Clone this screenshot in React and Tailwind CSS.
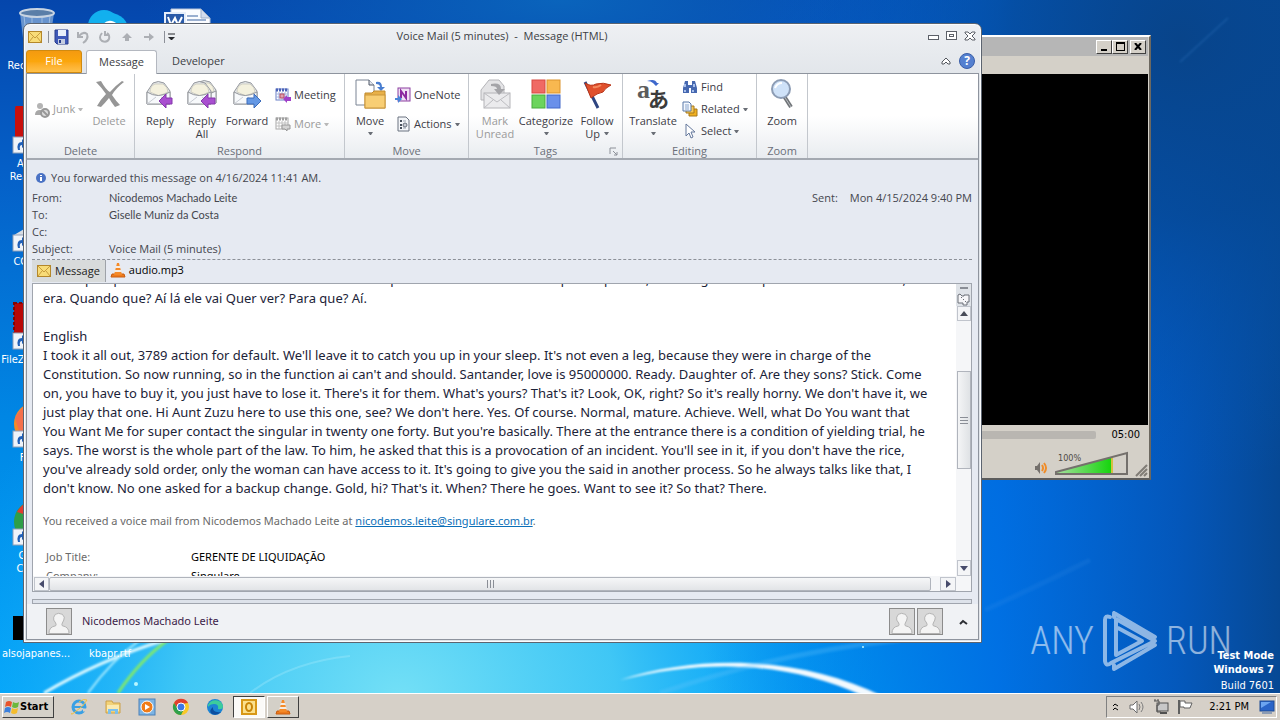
import React, { useState } from 'react';

const UI = "font-['Open_Sans','Noto_Sans',sans-serif]";
const NOTO = "font-['Noto_Sans','Open_Sans',sans-serif]";
const LATO = "font-['Lato','Open_Sans',sans-serif]";
const TAHOMA = "font-['DejaVu_Sans_Condensed','DejaVu_Sans',sans-serif]";

const MESSAGE_LINES = [
  'ele vai pra quem não havia nada mais disso tudo era um pouco assim mesmo dela aqui sim pra ela, ainda algum lado pra mim olha tudo isso, e',
  'era. Quando que? Aí lá ele vai Quer ver? Para que? Aí.',
  '',
  'English',
  "I took it all out, 3789 action for default. We'll leave it to catch you up in your sleep. It's not even a leg, because they were in charge of the",
  "Constitution. So now running, so in the function ai can't and should. Santander, love is 95000000. Ready. Daughter of. Are they sons? Stick. Come",
  "on, you have to buy it, you just have to lose it. There's it for them. What's yours? That's it? Look, OK, right? So it's really horny. We don't have it, we",
  "just play that one. Hi Aunt Zuzu here to use this one, see? We don't here. Yes. Of course. Normal, mature. Achieve. Well, what Do You want that",
  "You Want Me for super contact the singular in twenty one forty. But you're basically. There at the entrance there is a condition of yielding trial, he",
  "says. The worst is the whole part of the law. To him, he asked that this is a provocation of an incident. You'll see in it, if you don't have the rice,",
  "you've already sold order, only the woman can have access to it. It's going to give you the said in another process. So he always talks like that, I",
  "don't know. No one asked for a backup change. Gold, hi? That's it. When? There he goes. Want to see it? So that? There.",
];

function Svg({ w = 16, h = w, box, children }) {
  return (
    <svg width={w} height={h} viewBox={box || `0 0 ${w} ${h}`} fill="none" className="shrink-0" aria-hidden="true">
      {children}
    </svg>
  );
}

/* ---------- wallpaper ---------- */

function Wallpaper() {
  return (
    <svg className="absolute inset-0 h-full w-full" viewBox="0 0 1280 693" preserveAspectRatio="none" fill="none" aria-hidden="true">
      <defs>
        <linearGradient id="sky" x1="0" y1="0" x2="0" y2="1">
          <stop offset="0" stopColor="#0546ac" />
          <stop offset="0.25" stopColor="#0560c8" />
          <stop offset="0.6" stopColor="#0086e4" />
          <stop offset="1" stopColor="#00a6fa" />
        </linearGradient>
        <radialGradient id="glow" gradientUnits="userSpaceOnUse" cx="0" cy="0" r="1" gradientTransform="translate(400 700) scale(480 420)">
          <stop offset="0" stopColor="#74e0f6" />
          <stop offset="0.45" stopColor="#4bcdf5" stopOpacity="0.85" />
          <stop offset="1" stopColor="#089cf8" stopOpacity="0" />
        </radialGradient>
        <radialGradient id="beam" gradientUnits="userSpaceOnUse" cx="0" cy="0" r="1" gradientTransform="translate(560 0) scale(420 120)">
          <stop offset="0" stopColor="#0a64bc" />
          <stop offset="1" stopColor="#0a5cb8" stopOpacity="0" />
        </radialGradient>
        <linearGradient id="shade" x1="0" y1="0" x2="1" y2="0">
          <stop offset="0.55" stopColor="#0060d8" stopOpacity="0" />
          <stop offset="0.78" stopColor="#0068e0" stopOpacity="0.85" />
          <stop offset="0.92" stopColor="#0454b8" stopOpacity="0.95" />
          <stop offset="1" stopColor="#064894" />
        </linearGradient>
        <radialGradient id="corner" gradientUnits="userSpaceOnUse" cx="0" cy="0" r="1" gradientTransform="translate(1180 40) scale(420 440)">
          <stop offset="0" stopColor="#08448a" />
          <stop offset="0.4" stopColor="#064894" stopOpacity="0.75" />
          <stop offset="1" stopColor="#0458b8" stopOpacity="0" />
        </radialGradient>
        <filter id="soft">
          <feGaussianBlur stdDeviation="1" />
        </filter>
      </defs>
      <rect width="1280" height="693" fill="url(#sky)" />
      <rect width="1280" height="693" fill="url(#glow)" />
      <rect width="1280" height="693" fill="url(#shade)" />
      <rect width="1280" height="693" fill="url(#beam)" />
      <rect width="1280" height="693" fill="url(#corner)" />
      <path d="M1180 62L1228 18" stroke="#5aa6f0" strokeOpacity="0.15" strokeWidth="2" filter="url(#soft)" />
      <path d="M985 610Q1040 585 1090 560" stroke="#5aa6f0" strokeOpacity="0.1" strokeWidth="5" filter="url(#soft)" />
      <path d="M250 693Q290 662 350 656" stroke="#b4f0fc" strokeOpacity="0.3" strokeWidth="2" />
      <g filter="url(#soft)">
        <path d="M44 693Q100 660 165 640" stroke="#d8f8ff" strokeWidth="3" />
        <path d="M88 693Q112 660 140 640" stroke="#a8ecff" strokeWidth="2" />
        <path d="M118 693Q140 660 168 640" stroke="#7ee870" strokeWidth="3" />
        <path d="M620 680C700 654 800 656 882 696L868 698C790 662 710 658 620 680Z" fill="#ffffff" fillOpacity="0.95" />
        <path d="M660 693Q780 652 900 640" stroke="#6cc8fa" strokeOpacity="0.25" strokeWidth="5" />
      </g>
      <circle cx="136" cy="684" r="2" fill="#b8f6ff" />
      <circle cx="863" cy="647" r="1" fill="#b8f6ff" />
    </svg>
  );
}

/* ---------- desktop icons ---------- */

function Shortcut() {
  return (
    <g>
      <rect x="1" y="31" width="16" height="16" fill="#eef3fa" stroke="#8fa0b8" />
      <path d="M6 44Q4 36 10 36V33L15 38L10 42V39Q7 39 8 44Z" fill="#1f5fb8" />
    </g>
  );
}

const ICON_ART = {
  bin: (
    <>
      <path d="M8 5L13 47H36L42 5Z" fill="#7fa6d6" fillOpacity="0.8" />
      <path d="M12 8L16 44M20 9V44M30 9V44M38 8L34 44" stroke="#9cbce0" />
      <ellipse cx="25" cy="5" rx="17" ry="4" fill="#5a7ea8" stroke="#c8d4e2" strokeWidth="2" />
    </>
  ),
  skype: (
    <>
      <circle cx="18" cy="18" r="16" fill="#12b0ee" />
      <circle cx="24" cy="24" r="19" fill="#12b0ee" />
      <path d="M31 18Q24 12 19 17Q17 22 24 24Q32 27 29 32Q24 36 17 31" stroke="#fff" strokeWidth="4" />
    </>
  ),
  word: (
    <>
      <path d="M8 1H38L47 10V47H8Z" fill="#fbfcff" stroke="#b8c4d8" />
      <path d="M38 1V10H47Z" fill="#d3dcec" stroke="#9fb0c8" />
      <path d="M24 8H35M24 12H43" stroke="#9bb0d0" strokeWidth="2" />
      <rect x="2" y="5" width="20" height="17" fill="#2a5aa8" stroke="#e6eefa" strokeWidth="2" />
      <path d="M5 9L8 17L12 10L15 17L19 9" stroke="#fff" strokeWidth="2" />
    </>
  ),
  reader: (
    <>
      <rect x="3" y="-3" width="44" height="46" rx="6" fill="#c8100c" />
      <Shortcut />
    </>
  ),
  cleaner: (
    <>
      <path d="M2 31L24 18L46 31V44H14Z" fill="#d8dde4" />
      <Shortcut />
    </>
  ),
  filezilla: (
    <>
      <rect x="2" y="1" width="44" height="42" fill="#b80808" stroke="#7c0606" strokeWidth="2" strokeDasharray="3 2" />
      <Shortcut />
    </>
  ),
  firefox: (
    <>
      <circle cx="24" cy="24" r="22" fill="#f58a28" />
      <path d="M3 18Q8 8 18 3Q12 12 20 20L8 34Z" fill="#f4704c" />
      <Shortcut />
    </>
  ),
  chrome: (
    <>
      <circle cx="24" cy="24" r="22" fill="#2e9e48" />
      <path d="M5 14A22 22 0 0 1 44 14L24 20Z" fill="#e23c30" />
      <circle cx="24" cy="24" r="9" fill="#3b7ded" stroke="#fff" strokeWidth="2" />
      <Shortcut />
    </>
  ),
  black: <rect x="1" y="20" width="46" height="24" fill="#000" />,
};

const DESKTOP = [
  { art: 'bin', lines: ['Recycle Bin'], place: 'col-start-1 row-start-1' },
  { art: 'skype', lines: [], place: 'col-start-2 row-start-1' },
  { art: 'word', lines: [], place: 'col-start-3 row-start-1' },
  { art: 'reader', lines: ['Acrobat', 'Reader DC'], place: 'col-start-1 row-start-2' },
  { art: 'cleaner', lines: ['CCleaner'], place: 'col-start-1 row-start-3' },
  { art: 'filezilla', lines: ['FileZilla Client'], place: 'col-start-1 row-start-4' },
  { art: 'firefox', lines: ['Firefox'], place: 'col-start-1 row-start-5' },
  { art: 'chrome', lines: ['Google', 'Chrome'], place: 'col-start-1 row-start-6' },
  { art: 'black', lines: ['alsojapanes...'], place: 'col-start-1 row-start-7' },
  { art: 'black', lines: ['kbapr.rtf'], place: 'col-start-2 row-start-7' },
];

function DesktopIcons() {
  return (
    <div className="absolute left-0 top-0 grid auto-rows-[98px] grid-cols-[72px_76px_78px]">
      {DESKTOP.map(({ art, lines, place }) => (
        <div key={place} className={`flex flex-col items-center whitespace-nowrap pt-2 text-[11px] leading-[13px] text-white ${TAHOMA} ${place}`}>
          <Svg w={48} h={51}>{ICON_ART[art]}</Svg>
          {lines.map((line) => (
            <span key={line}>{line}</span>
          ))}
        </div>
      ))}
    </div>
  );
}

/* ---------- ribbon icons ---------- */

function Envelope({ x = 0 }) {
  return (
    <g transform={`translate(${x} 0)`}>
      <path d="M2 14L8 5Q13 2 19 5L25 13V26H2Z" fill="#e4e7ea" stroke="#94979c" />
      <path d="M5 14Q5 8 10 6H18Q23 9 23 14L14 18Z" fill="#f4f1de" stroke="#d0cfc4" />
      <path d="M2 14Q13 21 25 14V26H2Z" fill="#f7f9fb" stroke="#94979c" />
      <path d="M2 26L11 19M25 26L16 19" stroke="#c8ccd4" />
    </g>
  );
}

const ReplyIcon = () => (
  <Svg w={32}>
    <Envelope x={1} />
    <path d="M15 23L22 16V20H28V26H22V30Z" fill="#a94fd0" stroke="#8438ac" />
  </Svg>
);

const ReplyAllIcon = () => (
  <Svg w={32}>
    <g transform="translate(5 -1)"><Envelope /></g>
    <Envelope />
    <path d="M15 23L22 16V20H29V26H22V30Z" fill="#a94fd0" stroke="#8438ac" />
  </Svg>
);

const ForwardIcon = () => (
  <Svg w={32}>
    <Envelope x={1} />
    <path d="M30 23L23 16V20H16V26H23V30Z" fill="#6498e4" stroke="#3c6cba" />
  </Svg>
);

const DeleteIcon = () => (
  <Svg w={32}>
    <path d="M3 4L8 3Q13 12 17 14Q22 8 29 3L31 4Q23 10 19 17Q23 23 27 27L22 29Q18 24 16 20Q12 25 8 29L4 28Q8 21 13 16Q9 10 3 4Z" fill="#969696" />
  </Svg>
);

const JunkIcon = () => (
  <Svg w={16}>
    <circle cx="6" cy="4" r="3" fill="#b4b4b4" />
    <path d="M1 13Q1 8 6 8Q9 8 10 13Z" fill="#a8a8a8" />
    <circle cx="11" cy="11" r="4" fill="#dcdcdc" stroke="#989898" strokeWidth="2" />
    <path d="M8 8L14 14" stroke="#989898" strokeWidth="2" />
  </Svg>
);

const MeetingIcon = ({ muted }) => (
  <Svg w={16}>
    <rect x="1" y="2" width="12" height="11" fill="#fff" stroke={muted ? '#a8a8a8' : '#6a80c8'} />
    <path d="M1 3H13" stroke={muted ? '#a0a0a0' : '#4a62b8'} strokeWidth="3" strokeDasharray="2 1" />
    <path d="M4 5V13M7 5V13M10 5V13M1 7H13M1 10H13" stroke={muted ? '#c0c0c0' : '#a4b4e0'} />
    {muted ? (
      <path d="M7 9H15V13H12V15L10 13H7Z" fill="#d4d4d4" stroke="#989898" />
    ) : (
      <>
        <rect x="5" y="7" width="4" height="4" fill="#e0a0b0" stroke="#b84a60" />
        <path d="M8 12L12 8V10H16V14H12V16Z" fill="#a040c8" />
      </>
    )}
  </Svg>
);

const MoveIcon = () => (
  <Svg w={32}>
    <path d="M2 2H15L20 7V27H2Z" fill="#fff" stroke="#7a8494" />
    <path d="M15 2V7H20" fill="#e0e4ec" stroke="#505868" />
    <path d="M22 4Q28 3 28 9H31L27 13L23 9H26Q26 6 22 6Z" fill="#4a7ed0" />
    <path d="M11 15H18L20 13H31V30H11Z" fill="#e8b048" stroke="#c08a2c" />
    <rect x="11" y="17" width="20" height="13" fill="#f8ce74" stroke="#c9953a" />
  </Svg>
);

const OneNoteIcon = () => (
  <Svg w={16}>
    <rect x="3" y="1" width="12" height="13" fill="#f0e0f4" stroke="#8b3fa0" />
    <path d="M6 11V4L11 11V4" stroke="#8b2aa0" strokeWidth="2" />
    <path d="M0 11H3V8L7 12L3 16V13H0Z" fill="#4a86d8" />
  </Svg>
);

const ActionsIcon = () => (
  <Svg w={16}>
    <path d="M3 1H11L14 4V15H3Z" fill="#f4f6f9" stroke="#6b7380" />
    <path d="M5 5H7M5 9H7M5 12H7" stroke="#48505c" strokeWidth="2" />
    <path d="M8 5H11M8 12H11" stroke="#9aa2ae" />
    <circle cx="10" cy="9" r="2" fill="#c8ccd4" stroke="#6b7380" />
  </Svg>
);

const UnreadIcon = () => (
  <Svg w={32}>
    <path d="M2 12L10 2H20L25 8V22H2Z" fill="#e4e4e6" stroke="#b4b4b8" />
    <rect x="5" y="15" width="26" height="15" fill="#ebebed" stroke="#b4b4b8" />
    <path d="M5 15L18 24L31 15M5 30L14 22M31 30L22 22" stroke="#bcbcc0" />
    <path d="M12 6Q22 4 22 11H26L20 17L15 11H18Q18 8 12 8Z" fill="#a4a4a8" />
  </Svg>
);

const CategorizeIcon = () => (
  <Svg w={32}>
    <rect x="2" y="2" width="13" height="13" fill="#f06a64" stroke="#d84840" />
    <rect x="17" y="2" width="13" height="13" fill="#f8b850" stroke="#dc942c" />
    <rect x="2" y="17" width="13" height="13" fill="#6cd45c" stroke="#48ac3c" />
    <rect x="17" y="17" width="13" height="13" fill="#6a90ea" stroke="#4268c8" />
  </Svg>
);

const FlagIcon = () => (
  <Svg w={32}>
    <path d="M4 4L17 30" stroke="#2e4480" strokeWidth="3" />
    <path d="M4 5Q10 9 15 6Q22 4 30 7Q24 10 22 14Q16 15 10 20Z" fill="#e0502c" stroke="#b83418" />
    <path d="M12 9Q16 10 20 7" stroke="#f48a60" strokeWidth="2" />
  </Svg>
);

const TranslateIcon = () => (
  <svg width="32" height="32" viewBox="0 0 32 32" className="shrink-0 overflow-visible" aria-hidden="true">
    <text x="0" y="20" fontSize="26" fontWeight="bold" fill="#5c5c5c" className="font-['Liberation_Serif',serif]">a</text>
    <text x="11" y="29" fontSize="21" fontWeight="bold" fill="#3c3c3c" className="font-['Noto_Sans_CJK_JP',sans-serif]">あ</text>
    <path d="M10 3Q18 0 20 5H22L19 8L16 5Q14 3 10 3Z" fill="#3e68cc" />
  </svg>
);

const FindIcon = () => (
  <Svg w={16}>
    <path d="M3 2H6V6H10V2H13L15 9V14H9V9H7V14H1V9Z" fill="#4668b0" />
    <path d="M3 5V8M12 5V8M3 11V13M11 11V13" stroke="#a8c0ec" strokeWidth="2" />
  </Svg>
);

const RelatedIcon = () => (
  <Svg w={16}>
    <path d="M7 8H15V15H7Z" fill="#f0b020" stroke="#a87818" />
    <path d="M4 5H12V12H4Z" fill="#f6c858" stroke="#a87818" />
    <path d="M1 1H7L9 3V10H1Z" fill="#f4f8fe" stroke="#5878a8" />
    <path d="M3 4H7M3 6H7M3 8H7" stroke="#88a4cc" />
  </Svg>
);

const SelectIcon = () => (
  <Svg w={16}>
    <path d="M4 1V13L7 10L9 15L11 14L9 9H13Z" fill="#fff" stroke="#64789c" />
  </Svg>
);

const ZoomIcon = () => (
  <Svg w={32}>
    <path d="M18 18L25 29" stroke="#707478" strokeWidth="4" />
    <path d="M18 18L25 29" stroke="#b8bcc0" strokeWidth="1" />
    <circle cx="15" cy="11" r="9" fill="#cfe2f8" stroke="#8c9cb4" strokeWidth="2" />
    <path d="M9 10Q11 5 16 5" stroke="#fff" strokeWidth="2" />
  </Svg>
);

const MailIcon = ({ w = 14 }) => (
  <Svg w={w} h={w - 2} box="0 0 14 12">
    <rect x="0.5" y="0.5" width="13" height="11" fill="#f8dc78" stroke="#b4872a" />
    <path d="M1 1L7 7L13 1M1 11L5 6M13 11L9 6" stroke="#c89c3c" />
  </Svg>
);

const ConeIcon = ({ w = 16 }) => (
  <Svg w={w} box="0 0 16 16">
    <path d="M2 12H14L15 15H1Z" fill="#ee7a1c" stroke="#c85c10" />
    <path d="M7 1H9L12 13H4Z" fill="#f58a28" />
    <path d="M6 4H10L11 6H5ZM5 8H11L12 10H4Z" fill="#f4ece4" />
  </Svg>
);

const Person = () => (
  <span className="block h-[27px] w-[26px] shrink-0 border border-[#8c8c8c] bg-[#d8d8d8]">
    <svg viewBox="0 0 25 25" className="h-full w-full" aria-hidden="true">
      <path d="M2 25Q2 18 9 17Q10 16 9 14Q6 11 7 8Q8 4 12 4Q17 4 18 8Q18 11 16 14Q15 16 16 17Q23 18 23 25Z" fill="#f4f4f4" stroke="#b0b0b0" />
    </svg>
  </span>
);

function Caret({ muted }) {
  return (
    <Svg w={5} h={3}>
      <path d="M0 0H5L3 3H2Z" fill={muted ? '#b8b8b8' : '#6a6e76'} />
    </Svg>
  );
}

/* ---------- ribbon ---------- */

function BigButton({ icon, label, second, caret, disabled, width }) {
  return (
    <button
      type="button"
      disabled={disabled}
      className={`flex shrink-0 flex-col items-center whitespace-nowrap pt-[2px] leading-[13px] ${width} ${disabled ? 'text-[#9a9a9a]' : 'text-[#3c3c46]'}`}
    >
      {icon}
      <span className="mt-1">{label}</span>
      <span className="flex h-[13px] items-center gap-1">
        {second}
        {caret && <Caret muted={disabled} />}
      </span>
    </button>
  );
}

function SmallButton({ icon, label, caret, disabled }) {
  return (
    <button type="button" disabled={disabled} className={`flex h-[22px] items-center gap-[3px] whitespace-nowrap ${disabled ? 'text-[#9a9a9a]' : 'text-[#3c3c46]'}`}>
      {icon}
      <span>{label}</span>
      {caret && <Caret muted={disabled} />}
    </button>
  );
}

function Group({ title, width, launcher, children }) {
  return (
    <section className={`flex shrink-0 flex-col border-r border-[#c3c7cd] ${width}`}>
      <div className="flex flex-1 pt-[2px]">{children}</div>
      <div className="relative h-[15px] text-center leading-[15px] text-[#6a6e78]">
        {title}
        {launcher && (
          <span className="absolute right-1 top-1">
            <Svg w={9}>
              <path d="M1 7V1H7M4 4L8 8M8 5V8H5" stroke="#8c9098" />
            </Svg>
          </span>
        )}
      </div>
    </section>
  );
}

function Ribbon() {
  return (
    <div className="flex h-[86px] overflow-hidden border-b-2 border-[#a4a9b1] bg-gradient-to-b from-white via-white to-[#e9ecf0]">
      <Group title="Delete" width="w-[108px]">
        <div className="flex w-[61px] flex-col justify-center pl-[7px]">
          <SmallButton icon={<JunkIcon />} label="Junk" caret disabled />
        </div>
        <BigButton icon={<DeleteIcon />} label="Delete" disabled width="w-[42px]" />
      </Group>
      <Group title="Respond" width="w-[210px]">
        <BigButton icon={<ReplyIcon />} label="Reply" width="ml-1 w-[42px]" />
        <BigButton icon={<ReplyAllIcon />} label="Reply" second="All" width="w-[42px]" />
        <BigButton icon={<ForwardIcon />} label="Forward" width="w-[48px]" />
        <div className="flex flex-col gap-[7px] pl-1 pt-2">
          <SmallButton icon={<MeetingIcon />} label="Meeting" />
          <SmallButton icon={<MeetingIcon muted />} label="More" caret disabled />
        </div>
      </Group>
      <Group title="Move" width="w-[124px]">
        <BigButton icon={<MoveIcon />} label="Move" caret width="ml-1 w-[42px]" />
        <div className="flex flex-col gap-[7px] pl-1 pt-2">
          <SmallButton icon={<OneNoteIcon />} label="OneNote" />
          <SmallButton icon={<ActionsIcon />} label="Actions" caret />
        </div>
      </Group>
      <Group title="Tags" width="w-[154px]" launcher>
        <BigButton icon={<UnreadIcon />} label="Mark" second="Unread" disabled width="ml-1 w-[44px]" />
        <BigButton icon={<CategorizeIcon />} label="Categorize" caret width="w-[58px]" />
        <BigButton icon={<FlagIcon />} label="Follow" second="Up" caret width="w-[44px]" />
      </Group>
      <Group title="Editing" width="w-[134px]">
        <BigButton icon={<TranslateIcon />} label="Translate" caret width="ml-1 w-[52px]" />
        <div className="flex flex-col pl-[3px]">
          <SmallButton icon={<FindIcon />} label="Find" />
          <SmallButton icon={<RelatedIcon />} label="Related" caret />
          <SmallButton icon={<SelectIcon />} label="Select" caret />
        </div>
      </Group>
      <Group title="Zoom" width="w-[51px]">
        <BigButton icon={<ZoomIcon />} label="Zoom" width="w-full" />
      </Group>
    </div>
  );
}

/* ---------- message window ---------- */

function TitleBar() {
  return (
    <header className="flex h-[21px] items-center px-[2px]">
      <div className="flex flex-1 items-center gap-[6px]">
        <MailIcon />
        <span className="-mr-[2px] h-3 w-px bg-[#8c9098]" />
        <button type="button" aria-label="Save">
          <Svg w={16}>
            <path d="M2 1H15V15H4L2 13Z" fill="#3e58b8" stroke="#283c8c" />
            <rect x="5" y="1" width="8" height="6" fill="#e8eefa" />
            <rect x="5" y="10" width="7" height="5" fill="#c4cce0" />
            <rect x="6" y="11" width="2" height="3" fill="#283c8c" />
          </Svg>
        </button>
        <button type="button" aria-label="Undo">
          <Svg w={16}>
            <path d="M3 3V8H8M4 7Q8 2 12 5Q14 10 8 14" stroke="#acafb4" strokeWidth="2" />
          </Svg>
        </button>
        <button type="button" aria-label="Redo">
          <Svg w={16}>
            <path d="M5 4Q1 9 5 12Q10 14 12 10Q13 6 10 4M8 2V6H12" stroke="#acafb4" strokeWidth="2" />
          </Svg>
        </button>
        <button type="button" aria-label="Previous item">
          <Svg w={16}>
            <path d="M8 4L13 9H10V12H6V9H3Z" fill="#acafb4" />
          </Svg>
        </button>
        <button type="button" aria-label="Next item">
          <Svg w={16}>
            <path d="M3 7H8V4L13 8L8 12V9H3Z" fill="#acafb4" />
          </Svg>
        </button>
        <span className="ml-px h-3 w-px bg-[#8c9098]" />
        <button type="button" aria-label="Customize toolbar" className="-ml-[3px]">
          <Svg w={7} h={8}>
            <path d="M0 1H7" stroke="#26282c" />
            <path d="M0 4H7L4 7H3Z" fill="#26282c" />
          </Svg>
        </button>
      </div>
      <h1 className="text-[11px] text-[#3c3e44]">Voice Mail (5 minutes)&nbsp; -&nbsp; Message (HTML)</h1>
      <div className="flex flex-1 items-center justify-end gap-[6px] pb-[2px] pr-px">
        <button type="button" aria-label="Minimize">
          <Svg w={12}>
            <rect x="0.5" y="5.5" width="10" height="4" fill="#fff" stroke="#5c6068" />
          </Svg>
        </button>
        <button type="button" aria-label="Maximize">
          <Svg w={12}>
            <rect x="0.5" y="1.5" width="10" height="8" fill="#fff" stroke="#5c6068" />
            <rect x="3.5" y="4.5" width="4" height="2" fill="#fff" stroke="#5c6068" />
          </Svg>
        </button>
        <button type="button" aria-label="Close">
          <Svg w={12}>
            <path d="M1 2H4L6 4L8 2H11V3L8 6L11 9V10H8L6 8L4 10H1V9L4 6L1 3Z" fill="#fff" stroke="#5c6068" />
          </Svg>
        </button>
      </div>
    </header>
  );
}

function Tabs() {
  return (
    <nav className="flex h-[26px] items-end text-[11px]">
      <button type="button" className="h-[23px] w-14 rounded-t-[3px] border border-[#d08a10] bg-gradient-to-b from-[#f49a10] via-[#fba60c] to-[#ffc048] text-white">
        File
      </button>
      <button type="button" className="relative top-px ml-1 h-6 w-[71px] rounded-t-[3px] border border-b-0 border-[#b4b8c0] bg-white text-[#3c3e44]">
        Message
      </button>
      <button type="button" className="h-[23px] px-[15px] text-[#3c3e44]">
        Developer
      </button>
      <div className="ml-auto flex items-center gap-2 pb-1 pr-1">
        <button type="button" aria-label="Collapse ribbon">
          <Svg w={10}>
            <path d="M1 6L5 2L9 6V8H7L5 6L3 8H1Z" fill="#fff" stroke="#54585f" />
          </Svg>
        </button>
        <button type="button" aria-label="Help" className="h-4 w-4 rounded-full border border-[#3a5ea8] bg-[#5480d0] text-xs font-bold leading-[14px] text-white">
          ?
        </button>
      </div>
    </nav>
  );
}

function HeaderRow({ name, children }) {
  return (
    <div className="flex h-[17px] items-center">
      <dt className="w-[77px]">{name}</dt>
      <dd>{children}</dd>
    </div>
  );
}

const SB_BUTTON = 'flex shrink-0 items-center justify-center border border-[#c0c4cc] bg-[#f4f5f7]';

function VerticalScroll() {
  return (
    <div className="flex w-[15px] shrink-0 flex-col items-center bg-[#f5f6f8]">
      <div className="flex w-full flex-col items-center gap-1 bg-[#dfe3e8] pt-[3px]">
        <span className="h-[2px] w-2 bg-[#8a8e96]" />
        <Svg w={13}>
          <path d="M1 2L3 1L5 3H7V2H12V9H10V12H6V10H1Z" fill="#f6f6f8" stroke="#6c7078" />
          <path d="M4 5L5 4M6 7L7 6M8 9L9 8" stroke="#6c7078" />
        </Svg>
      </div>
      <button type="button" aria-label="Scroll up" className={`h-[15px] w-[14px] ${SB_BUTTON}`}>
        <Svg w={8} h={5}>
          <path d="M0 5L4 0L8 5Z" fill="#484c58" />
        </Svg>
      </button>
      <div className="flex w-full flex-1 flex-col items-center">
        <div className="grow-[50]" />
        <div className="flex h-[98px] w-[14px] flex-col items-center justify-center gap-[2px] border border-[#b0b4bc] bg-gradient-to-r from-[#f4f5f6] to-[#dfe2e5]">
          <span className="h-px w-2 bg-[#8a8e96]" />
          <span className="h-px w-2 bg-[#8a8e96]" />
          <span className="h-px w-2 bg-[#8a8e96]" />
        </div>
        <div className="grow-[91]" />
      </div>
      <button type="button" aria-label="Scroll down" className={`h-4 w-[14px] ${SB_BUTTON}`}>
        <Svg w={8} h={5}>
          <path d="M0 0H8L4 5Z" fill="#484c6c" />
        </Svg>
      </button>
    </div>
  );
}

function HorizontalScroll() {
  return (
    <div className="flex h-[15px] shrink-0 items-center bg-[#f5f6f8] pl-px pr-[15px]">
      <button type="button" aria-label="Scroll left" className={`h-[14px] w-[15px] ${SB_BUTTON}`}>
        <Svg w={5} h={8}>
          <path d="M5 0V8L0 4Z" fill="#484c6c" />
        </Svg>
      </button>
      <div className="mr-[9px] flex h-[14px] flex-1 items-center justify-center gap-[2px] rounded-[2px] border border-[#b0b4bc] bg-gradient-to-b from-[#f6f7f8] to-[#e2e4e7]">
        <span className="h-2 w-px bg-[#8a8e96]" />
        <span className="h-2 w-px bg-[#8a8e96]" />
        <span className="h-2 w-px bg-[#8a8e96]" />
      </div>
      <button type="button" aria-label="Scroll right" className={`h-[14px] w-4 ${SB_BUTTON}`}>
        <Svg w={5} h={8}>
          <path d="M0 0V8L5 4Z" fill="#484c6c" />
        </Svg>
      </button>
    </div>
  );
}

function MessageBody() {
  return (
    <div className="flex min-h-0 flex-1 flex-col border border-[#a0a5ae] bg-white">
      <div className="flex min-h-0 flex-1">
        <article className={`min-w-0 flex-1 overflow-hidden pl-[10px] ${NOTO}`}>
          <div className="-mt-[14px] whitespace-nowrap text-[13px] leading-[19px] text-[#1c2338]">
            {MESSAGE_LINES.map((line, i) => (
              <p key={i} className="h-[19px]">{line}</p>
            ))}
          </div>
          <p className="mt-[13px] whitespace-nowrap text-[11px] leading-[19px] text-[#6a6a6a]">
            You received a voice mail from Nicodemos Machado Leite at{' '}
            <a href="mailto:nicodemos.leite@singulare.com.br" className="text-[#0b6fb8] underline">nicodemos.leite@singulare.com.br</a>.
          </p>
          <table className="ml-[3px] mt-[17px] text-[11px] leading-[19px]">
            <tbody>
              <tr>
                <th className="w-[145px] text-left font-normal text-[#6a6a6a]">Job Title:</th>
                <td className="text-black">GERENTE DE LIQUIDAÇÃO</td>
              </tr>
              <tr>
                <th className="text-left font-normal text-[#6a6a6a]">Company:</th>
                <td className="text-black">Singulare</td>
              </tr>
            </tbody>
          </table>
        </article>
        <VerticalScroll />
      </div>
      <HorizontalScroll />
    </div>
  );
}

function MessageWindow() {
  return (
    <main className={`absolute bottom-[50px] left-[23px] right-[298px] top-[23px] flex flex-col rounded-t-[7px] border border-[#5c6470] bg-gradient-to-b from-[#eef0f3] to-[#e0e4e9] to-[60px] p-[2px] text-[11px] shadow-[inset_0_0_0_1px_#fbfcfd] ${UI}`}>
      <TitleBar />
      <Tabs />
      <div className="flex min-h-0 flex-1 flex-col border border-[#8e949e] bg-[#e6eaf2]">
        <Ribbon />
        <div className="flex min-h-0 flex-1 flex-col pl-[5px] pr-[6px] text-[#44464e]">
          <div className="mt-[9px] flex h-[18px] items-center gap-1 pl-[3px]">
            <Svg w={12}>
              <circle cx="6" cy="6" r="5" fill="#4a72c4" />
              <path d="M6 5V9M6 3V4" stroke="#fff" strokeWidth="2" />
            </Svg>
            <span>You forwarded this message on 4/16/2024 11:41 AM.</span>
          </div>
          <div className="mt-[3px] flex justify-between">
            <dl>
              <HeaderRow name="From:">
                <span className={LATO}>Nicodemos Machado Leite</span>
              </HeaderRow>
              <HeaderRow name="To:">
                <span className={LATO}>Giselle Muniz da Costa</span>
              </HeaderRow>
              <HeaderRow name="Cc:" />
              <HeaderRow name="Subject:">Voice Mail (5 minutes)</HeaderRow>
            </dl>
            <p className="flex h-[17px] items-center gap-3">
              <span>Sent:</span>
              <span>Mon 4/15/2024 9:40 PM</span>
            </p>
          </div>
          <div className="mt-px flex h-6 items-start border-t border-dashed border-[#8c9098]">
            <button type="button" className="flex h-[22px] items-center gap-1 border-r border-[#9ea2a8] bg-[#d8dbdb] pl-[5px] pr-[5px] text-[#1c1c20]">
              <MailIcon />
              Message
            </button>
            <button type="button" className="flex h-5 items-center gap-[3px] pl-1 text-black">
              <ConeIcon />
              audio.mp3
            </button>
          </div>
          <MessageBody />
          <div className="mt-[7px] h-[5px] shrink-0 border border-[#a0a5ae] bg-[#dde2ea]" />
        </div>
        <footer className="flex h-[35px] shrink-0 items-center gap-[2px] bg-[#f0f2f5] pl-[19px] pr-[10px]">
          <Person />
          <span className={`ml-2 flex-1 text-[11px] text-[#3c1c48] ${NOTO}`}>Nicodemos Machado Leite</span>
          <Person />
          <Person />
          <button type="button" aria-label="Expand people pane" className="ml-[14px]">
            <Svg w={9} h={6}>
              <path d="M1 5L4 2L8 5" stroke="#2c2e34" strokeWidth="2" />
            </Svg>
          </button>
        </footer>
      </div>
    </main>
  );
}

/* ---------- media player ---------- */

const RAISED = 'border border-b-[#404040] border-l-white border-r-[#404040] border-t-white bg-[#d4d0c8]';

function PlayerWindow() {
  const [volume, setVolume] = useState(100);

  return (
    <section className={`absolute left-[55%] right-[129px] top-[35px] border-2 border-b-[#5c5c5c] border-l-[#d4d0c8] border-r-[#6c6860] border-t-white bg-[#d4d0c8] p-[1px] pt-0 ${TAHOMA}`}>
      <div className="flex h-[19px] items-center justify-end bg-[#b6b6b6] pr-[2px]">
        <button type="button" aria-label="Minimize player" className={`flex h-[14px] w-4 items-end justify-center pb-[2px] ${RAISED}`}>
          <span className="h-[2px] w-[6px] bg-black" />
        </button>
        <button type="button" aria-label="Maximize player" className={`flex h-[14px] w-4 items-center justify-center ${RAISED}`}>
          <span className="h-[9px] w-[9px] border border-t-2 border-black" />
        </button>
        <button type="button" aria-label="Close player" className={`ml-[2px] flex h-[14px] w-4 items-center justify-center ${RAISED}`}>
          <Svg w={8} h={7}>
            <path d="M1 0L7 7M7 0L1 7" stroke="#000" strokeWidth="2" />
          </Svg>
        </button>
      </div>
      <div className="h-[18px]" />
      <div className="h-[351px] bg-black" />
      <div className="flex h-5 items-center gap-[15px] pr-2">
        <input
          type="range"
          aria-label="Position"
          defaultValue={0}
          className="h-2 min-w-0 flex-1 appearance-none rounded-[2px] bg-[#b9b6b1] [&::-webkit-slider-thumb]:appearance-none"
        />
        <span className="text-[11px] text-black">05:00</span>
      </div>
      <div className="flex h-8 items-end justify-end gap-[7px]">
        <div className="mb-[2px]">
          <Svg w={14} h={14}>
            <path d="M1 5H3L6 1V13L3 9H1Z" fill="#74706c" />
            <path d="M8 4Q10 7 8 10M10 2Q14 7 10 12" stroke="#f08c28" strokeWidth="2" />
          </Svg>
        </div>
        <label className="relative mb-[2px] block">
          <svg width="73" height="26" viewBox="0 0 73 26" aria-hidden="true">
            <defs>
              <linearGradient id="vol" x1="0" x2="1">
                <stop offset="0" stopColor="#a8e0a0" />
                <stop offset="1" stopColor="#14d40c" />
              </linearGradient>
            </defs>
            <path d="M1 23L57 8V25H1Z" fill="url(#vol)" />
            <path d="M57 8V25" stroke="#d4c040" strokeWidth="2" />
            <path d="M1 23L72 4V25H1Z" fill="none" stroke="#74706c" strokeWidth="2" />
            <text x="3" y="12" fontSize="9" fill="#4c4a46">{volume}%</text>
          </svg>
          <input
            type="range"
            aria-label="Volume"
            min="0"
            max="125"
            value={volume}
            onChange={(e) => setVolume(Number(e.target.value))}
            className="absolute inset-0 h-full w-full opacity-0"
          />
        </label>
        <Svg w={13} h={14}>
          <path d="M1 13L12 2M5 13L12 6M9 13L12 10" stroke="#807c76" strokeWidth="2" />
        </Svg>
      </div>
    </section>
  );
}

/* ---------- watermark ---------- */

function Watermark() {
  return (
    <div className="absolute bottom-0 right-[6px] text-white">
      <div className="mb-[18px] mr-[42px] flex items-center gap-2 font-['Liberation_Sans_Narrow','Roboto_Condensed','Roboto',sans-serif] text-[38px] font-light leading-[68px] text-white/55">
        <span>ANY</span>
        <svg width="56" height="64" viewBox="0 0 56 64" fill="none" stroke="#ffffff" strokeOpacity="0.55" strokeWidth="4" strokeLinejoin="round" strokeLinecap="round" aria-hidden="true">
          <path d="M8 8Q3 6 3 11V52Q4 58 9 54L53 32L14 10V46L40 32L16 19M12 4L53 28M12 4V8M12 60L53 36M12 60V56" />
        </svg>
        <span>RUN</span>
      </div>
      <div className={`absolute bottom-0 right-0 text-right text-[11px] leading-[14px] ${TAHOMA}`}>
        <p className="font-bold">Test Mode</p>
        <p className="font-bold">Windows 7</p>
        <p className="mt-[2px]">Build 7601</p>
      </div>
    </div>
  );
}

/* ---------- taskbar ---------- */

const TASK_ICONS = [
  {
    name: 'Internet Explorer',
    art: (
      <>
        <circle cx="9" cy="9" r="6" stroke="#3aa0e4" strokeWidth="3" />
        <path d="M4 9H15" stroke="#3aa0e4" strokeWidth="2" />
        <path d="M13 12H17" stroke="#d6d0c8" strokeWidth="3" />
        <path d="M2 15Q0 18 5 14Q14 8 17 2Q14 0 9 4" stroke="#f0c040" strokeWidth="1" />
      </>
    ),
  },
  {
    name: 'Explorer',
    art: (
      <>
        <path d="M2 3H8L9 5H16V15H2Z" fill="#f2d278" stroke="#cca048" />
        <rect x="3" y="7" width="12" height="6" fill="#fbeab0" />
        <path d="M4 16V11H14V16H11V13H7V16Z" fill="#7cc0ec" />
      </>
    ),
  },
  {
    name: 'Media Player',
    art: (
      <>
        <rect x="1" y="1" width="16" height="16" fill="#7cb4e4" stroke="#4a80b8" />
        <circle cx="9" cy="9" r="6" fill="#f07c18" stroke="#fff" />
        <path d="M7 6L12 9L7 12Z" fill="#fff" />
      </>
    ),
  },
  {
    name: 'Chrome',
    art: (
      <>
        <circle cx="9" cy="9" r="8" fill="#f8c828" />
        <path d="M2 5A8 8 0 0 1 16 5L9 6L6 11Z" fill="#e04030" />
        <path d="M2 5A8 8 0 0 0 9 17L12 11L6 11Z" fill="#30a04c" />
        <circle cx="9" cy="9" r="4" fill="#3c78e8" stroke="#fff" />
      </>
    ),
  },
  {
    name: 'Edge',
    art: (
      <>
        <circle cx="9" cy="9" r="8" fill="#1c84d4" />
        <path d="M2 7A8 8 0 0 1 17 8Q17 12 12 11Q13 6 8 6Q4 6 2 9Z" fill="#3ccc9c" />
        <path d="M7 9Q6 15 15 14Q11 18 6 16Q2 13 7 9Z" fill="#0c4ea0" />
      </>
    ),
  },
];

function Taskbar() {
  return (
    <footer className={`relative flex h-[27px] shrink-0 items-center border-t border-white bg-[#d6d0c8] pl-[2px] pr-[3px] text-[11px] text-black ${TAHOMA}`}>
      <button type="button" className={`flex h-[22px] w-[52px] items-center font-bold ${RAISED}`}>
        <Svg w={17} h={16}>
          <path d="M3 3Q6 1 9 3L8 8Q5 6 2 8Z" fill="#e8542c" />
          <path d="M10 3Q13 5 16 3L15 8Q12 10 9 8Z" fill="#6cb83c" />
          <path d="M2 9Q5 7 8 9L7 14Q4 12 1 14Z" fill="#3c80dc" />
          <path d="M9 9Q12 11 15 9L14 14Q11 16 8 14Z" fill="#f4bc2c" />
        </Svg>
        Start
      </button>
      <div className="ml-4 flex gap-4">
        {TASK_ICONS.map(({ name, art }) => (
          <button key={name} type="button" aria-label={name}>
            <Svg w={18}>{art}</Svg>
          </button>
        ))}
      </div>
      <button type="button" aria-label="Outlook" className="ml-[9px] flex h-[22px] w-8 items-center justify-center border border-b-white border-l-[#404040] border-r-white border-t-[#404040] bg-[#fbfaf8]">
        <Svg w={16}>
          <rect x="1" y="1" width="14" height="14" fill="#fbe08c" stroke="#d89818" strokeWidth="2" />
          <ellipse cx="8" cy="8" rx="3" ry="4" stroke="#c88408" strokeWidth="2" />
        </Svg>
      </button>
      <button type="button" aria-label="VLC" className={`ml-[2px] flex h-[22px] w-8 items-center justify-center ${RAISED}`}>
        <ConeIcon />
      </button>
      <div className="ml-auto flex h-[22px] items-center border border-b-white border-l-[#808080] border-r-white border-t-[#808080] pl-[5px] pr-[1px]">
        <Svg w={7} h={10}>
          <path d="M1 4L3 2L6 4M1 8L3 6L6 8" stroke="#000" strokeWidth="1" />
        </Svg>
        <div className="ml-[10px] flex items-center gap-2">
          <Svg w={16}>
            <path d="M1 6H4L8 2V14L4 10H1Z" fill="#fff" stroke="#6c6c6c" />
            <path d="M10 5Q12 8 10 11M12 3Q16 8 12 13" stroke="#7c7c7c" />
          </Svg>
          <Svg w={16}>
            <rect x="4" y="4" width="11" height="8" fill="#c8c8c8" stroke="#505050" />
            <path d="M7 14H14" stroke="#505050" strokeWidth="2" />
            <path d="M1 2H6V6H4V13H8M2 0V2M5 0V2" stroke="#505050" />
          </Svg>
          <Svg w={16}>
            <path d="M2 1V15" stroke="#606060" strokeWidth="2" />
            <path d="M3 2H8V4H15L13 9H7V8H3Z" fill="#fff" stroke="#606060" />
          </Svg>
        </div>
        <span className="ml-4">2:21 PM</span>
        <span className="ml-[10px]">
          <Svg w={16} h={14}>
            <rect x="1" y="1" width="14" height="10" fill="#2a64c8" stroke="#1c4a94" />
            <path d="M2 2H12L2 8Z" fill="#6ca4f0" />
            <path d="M3 13H13" stroke="#8c9cb4" strokeWidth="2" />
          </Svg>
        </span>
      </div>
    </footer>
  );
}

export default function App() {
  return (
    <div className="flex h-screen flex-col overflow-hidden">
      <div className="relative min-h-0 flex-1 overflow-hidden">
        <Wallpaper />
        <DesktopIcons />
        <PlayerWindow />
        <MessageWindow />
        <Watermark />
      </div>
      <Taskbar />
    </div>
  );
}
